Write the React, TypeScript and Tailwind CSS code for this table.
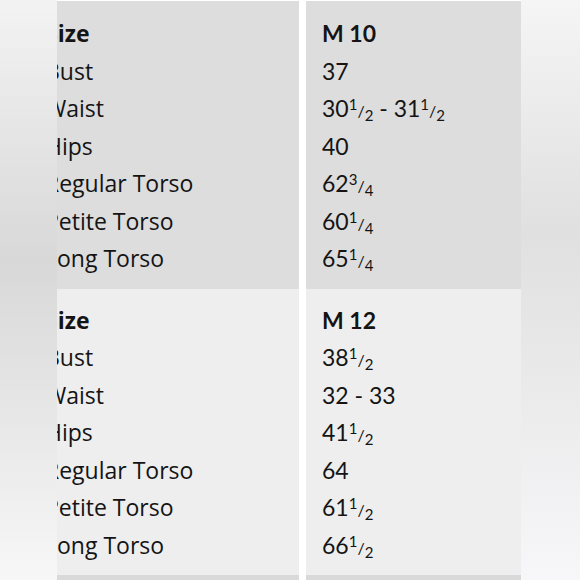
import type { ReactNode } from 'react';

type Row = { label: string; value: ReactNode };

function Frac({ n, d }: { n: string; d: string }) {
  return (
    <span className="whitespace-nowrap leading-none">
      <span className="relative -top-[7px] text-[15px]">{n}</span>
      <span className="text-[16px]">/</span>
      <span className="relative top-[4px] text-[15px]">{d}</span>
    </span>
  );
}

const tables: { tone: string; size: string; rows: Row[] }[] = [
  {
    tone: 'bg-[#dddddd]',
    size: 'M 10',
    rows: [
      { label: 'Bust', value: '37' },
      { label: 'Waist', value: <>30<Frac n="1" d="2" /> - 31<Frac n="1" d="2" /></> },
      { label: 'Hips', value: '40' },
      { label: 'Regular Torso', value: <>62<Frac n="3" d="4" /></> },
      { label: 'Petite Torso', value: <>60<Frac n="1" d="4" /></> },
      { label: 'Long Torso', value: <>65<Frac n="1" d="4" /></> },
    ],
  },
  {
    tone: 'bg-[#eeeeee]',
    size: 'M 12',
    rows: [
      { label: 'Bust', value: <>38<Frac n="1" d="2" /></> },
      { label: 'Waist', value: '32 - 33' },
      { label: 'Hips', value: <>41<Frac n="1" d="2" /></> },
      { label: 'Regular Torso', value: '64' },
      { label: 'Petite Torso', value: <>61<Frac n="1" d="2" /></> },
      { label: 'Long Torso', value: <>66<Frac n="1" d="2" /></> },
    ],
  },
];

function SizeTable({ tone, size, rows, pad }: { tone: string; size: string; rows: Row[]; pad: string }) {
  return (
    <div className="grid grid-cols-[270px_215px] gap-x-[7px]">
      <div className={`${tone} ${pad} pl-4 font-['Open_Sans','Liberation_Sans',sans-serif] text-[23px]`}>
        <div className="font-bold">Size</div>
        {rows.map((r) => (
          <div key={r.label}>{r.label}</div>
        ))}
      </div>
      <div className={`${tone} ${pad} pl-4`}>
        <div className="font-bold">{size}</div>
        {rows.map((r) => (
          <div key={r.label} className="h-[37.5px]">{r.value}</div>
        ))}
      </div>
    </div>
  );
}

export default function App() {
  return (
    <div className="relative w-[580px] h-[580px] overflow-hidden bg-white font-['Lato','Liberation_Sans',sans-serif] text-[23px] leading-[37.5px] text-[#141414]">
      <div className="flex flex-col pl-[29px] pt-px">
        <SizeTable {...tables[0]} pad="pt-[14px] pb-[11px]" />
        <SizeTable {...tables[1]} pad="pt-[13px] pb-[11px]" />
        <div className="grid grid-cols-[270px_215px] gap-x-[7px] h-6">
          <div className="bg-[#d9d9d9]" />
          <div className="bg-[#d9d9d9]" />
        </div>
      </div>

      {/* blurred photo edges */}
      <div className="absolute left-0 top-0 h-full w-[57px] bg-linear-to-b from-[#f3f3f3] via-[#d8d8d8] via-45% to-[#f7f7f7]" />
      <div className="absolute left-[521px] top-0 h-full w-[59px] bg-linear-to-b from-[#f5f5f5] via-[#e0e0e0] via-40% to-[#f7f7f9]" />
    </div>
  );
}
